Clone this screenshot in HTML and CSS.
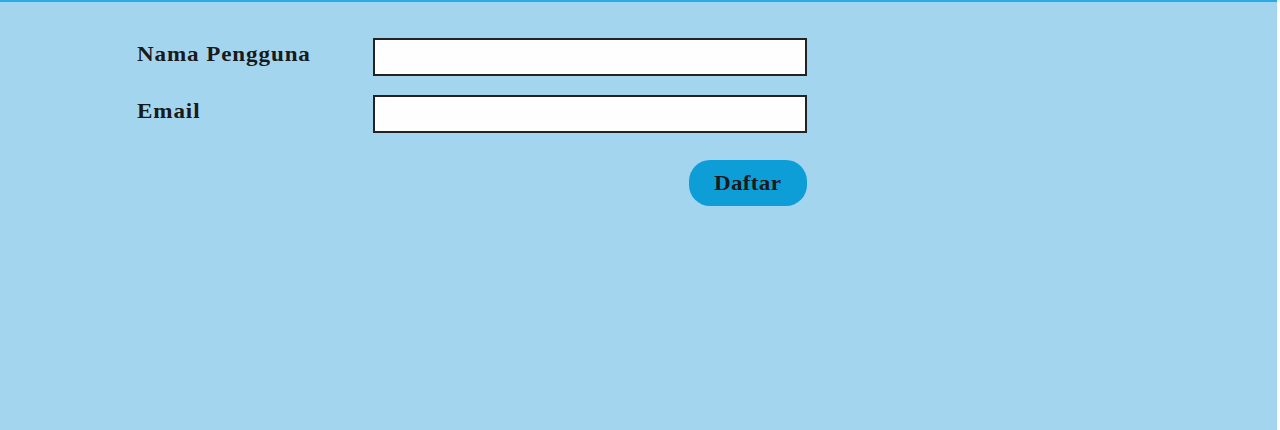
FILE: index.html
```html
<!DOCTYPE html>
<html lang="id">
<head>
<meta charset="utf-8">
<title>Daftar</title>
<link rel="stylesheet" href="styles.css">
</head>
<body>
<div class="page">
  <form class="form">
    <label class="label" for="nama"><span class="wide">Nama Pengguna</span></label>
    <input class="field" id="nama" type="text">
    <label class="label" for="email"><span class="wide">Email</span></label>
    <input class="field" id="email" type="text">
    <div class="actions">
      <button class="btn" type="button"><span class="wide wide-center">Daftar</span></button>
    </div>
  </form>
</div>
</body>
</html>
```
FILE: styles.css
```css
html, body {
  margin: 0;
  padding: 0;
  background: #ffffff;
  overflow: hidden;
}
.page {
  width: 1277px;
  height: 430px;
  box-sizing: border-box;
  background: #a3d5ee;
  border-top: 2px solid #2aaae2;
  padding-top: 36px;
  font-family: "Liberation Serif", "Times New Roman", serif;
  color: #1a1a1a;
}
.form {
  margin-left: 137px;
  display: grid;
  grid-template-columns: 236px 434px;
  row-gap: 19px;
  align-items: start;
}
.label {
  font-size: 21px;
  font-weight: bold;
  letter-spacing: 0.8px;
  line-height: 24px;
  padding-top: 4px;
}
.wide {
  display: inline-block;
  transform: scaleX(1.1);
  transform-origin: left center;
}
.wide-center {
  transform-origin: center center;
}
.field {
  box-sizing: border-box;
  width: 434px;
  height: 38px;
  margin: 0;
  border: 2px solid #232323;
  background: #fefefe;
  padding: 0 6px;
  font-family: inherit;
  outline: none;
}
.actions {
  grid-column: 2;
  display: flex;
  justify-content: flex-end;
  padding-top: 8px;
}
.btn {
  width: 118px;
  height: 46px;
  border: none;
  border-radius: 21px;
  background: #0e9ed7;
  color: #1a1a1a;
  font-family: "Liberation Serif", "Times New Roman", serif;
  font-weight: bold;
  font-size: 21px;
  letter-spacing: 0.3px;
  padding: 0;
}
```
